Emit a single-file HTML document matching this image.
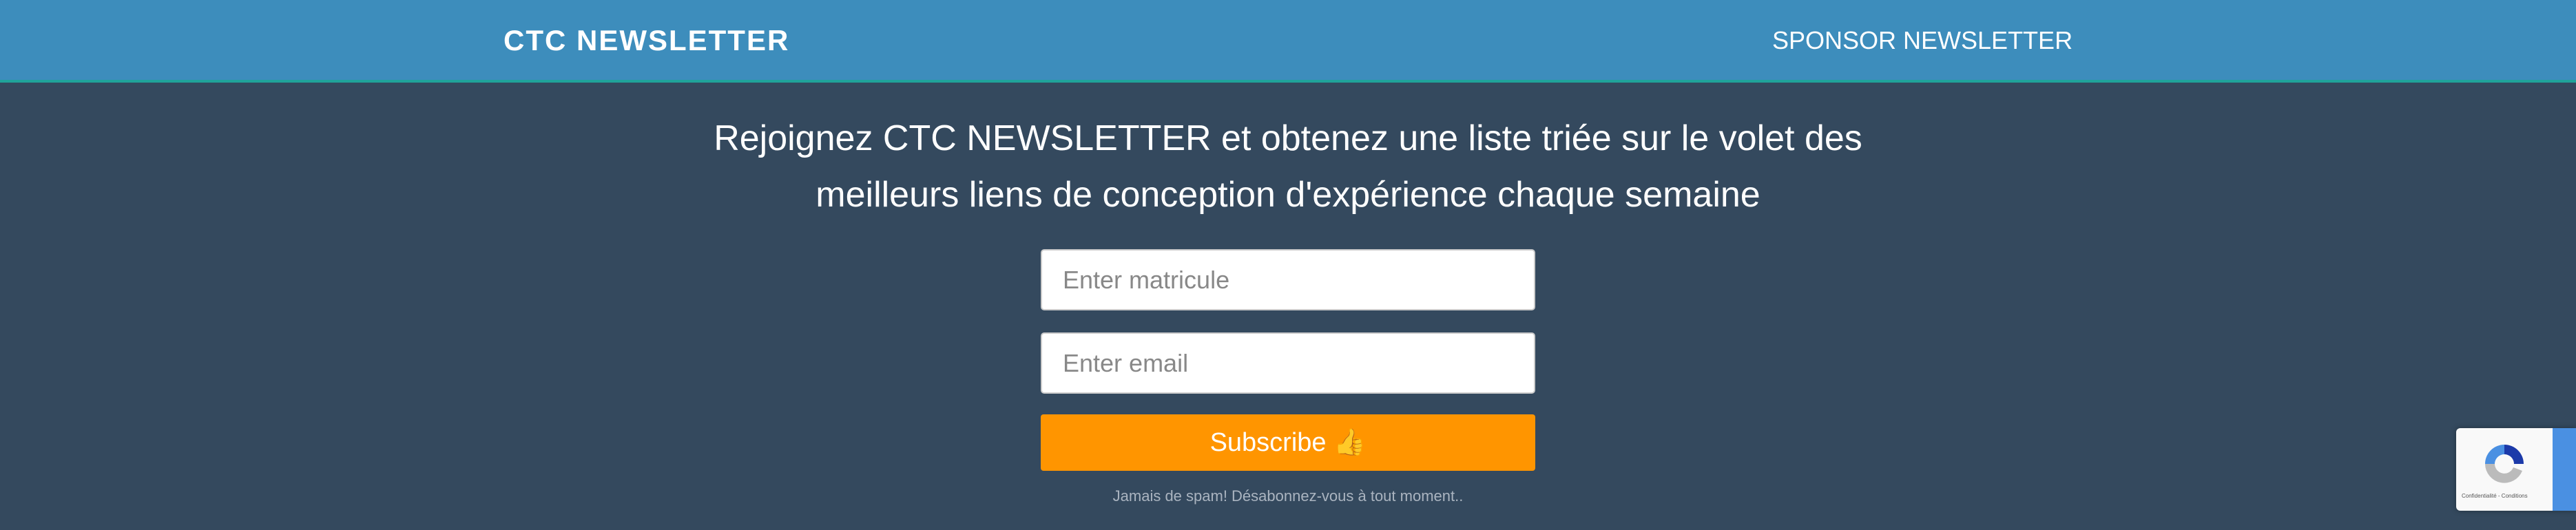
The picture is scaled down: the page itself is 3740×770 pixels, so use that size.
<!DOCTYPE html>
<html><head><meta charset="utf-8"><style>
*{margin:0;padding:0;box-sizing:border-box}
body{width:3740px;height:770px;background:#34495e;font-family:"Liberation Sans",Arial,sans-serif;position:relative;overflow:hidden}
.hdr{position:absolute;left:0;top:0;width:3740px;height:120px;background:#3d8dbc;border-bottom:4px solid #20a39a}
.logo{position:absolute;left:731px;top:34px;color:#fff;font-weight:bold;font-size:42px;letter-spacing:2px;line-height:50px}
.sp{position:absolute;left:2573px;top:38px;color:#fff;font-size:36px;line-height:42px}
h1{position:absolute;left:0;width:3740px;top:160px;text-align:center;color:#fff;font-weight:normal;font-size:52px;line-height:82px}
.in{position:absolute;left:1511px;width:718px;height:89px;background:#fff;border:2px solid #ccc;border-radius:5px;color:#888;font-size:36px;padding-left:30px;line-height:85px}
.btn{position:absolute;left:1511px;top:602px;width:718px;height:82px;background:#ff9500;border-radius:4px;color:#fff;font-size:38px;text-align:center;line-height:82px}
.sm{position:absolute;left:0;width:3740px;top:708px;text-align:center;color:#aab4c0;font-size:22px}
.rc{position:absolute;left:3566px;top:622px;width:174px;height:120px;background:#f9f9f9;border-radius:6px 0 0 6px;box-shadow:0 0 8px rgba(0,0,0,.35)}
.rc .b{position:absolute;left:140px;top:0;width:34px;height:120px;background:#4a90e2}
.rc .t{position:absolute;left:8px;top:94px;font-size:8px;color:#555;white-space:nowrap}
</style></head><body>
<div class="hdr"><div class="logo">CTC NEWSLETTER</div><div class="sp">SPONSOR NEWSLETTER</div></div>
<h1>Rejoignez CTC NEWSLETTER et obtenez une liste triée sur le volet des<br>meilleurs liens de conception d'expérience chaque semaine</h1>
<div class="in" style="top:362px">Enter matricule</div>
<div class="in" style="top:483px">Enter email</div>
<div class="btn">Subscribe <span style="color:#ffcc4d">👍</span></div>
<div class="sm">Jamais de spam! Désabonnez-vous à tout moment..</div>
<div class="rc">
<svg style="position:absolute;left:32px;top:14px" width="76" height="76" viewBox="0 0 76 76">
<path d="M38 10 A28 28 0 0 0 10 38 L24 38 A14 14 0 0 1 38 24Z" fill="#4a90e2"/>
<path d="M38 10 A28 28 0 0 1 66 38 L52 38 A14 14 0 0 0 38 24Z" fill="#1c3aa9"/>
<path d="M10 38 A28 28 0 0 0 64 48 L51 43 A14 14 0 0 1 24 38Z" fill="#bbb"/>
</svg>
<div class="t">Confidentialité - Conditions</div>
<div class="b"></div></div>
</body></html>
